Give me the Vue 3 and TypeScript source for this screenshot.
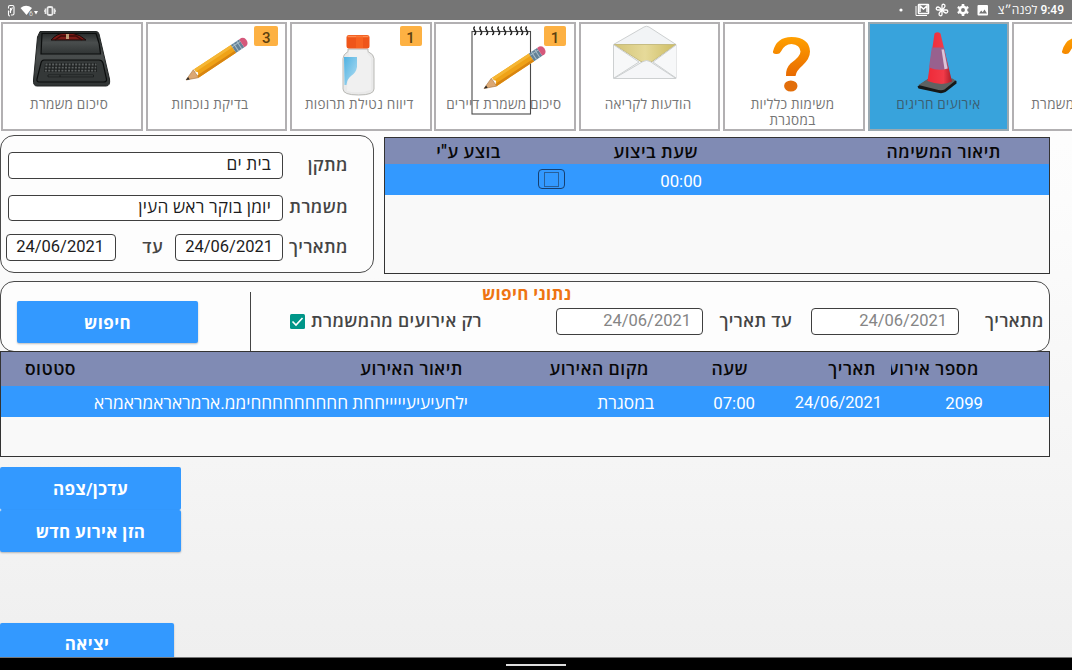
<script setup lang="ts">
type Art = 'typewriter' | 'pencil' | 'bottle' | 'notebook' | 'envelope' | 'question' | 'cone'

interface Tile {
  lines: string[]
  art: Art
  badge?: number
  active?: boolean
  shift?: string
}

const tiles: Tile[] = [
  { lines: ['סיכום משמרת'], art: 'typewriter', shift: 'shift-m' },
  { lines: ['בדיקת נוכחות'], art: 'pencil', badge: 3, shift: 'shift-l' },
  { lines: ['דיווח נטילת תרופות'], art: 'bottle', badge: 1 },
  { lines: ['סיכום משמרת דיירים'], art: 'notebook', badge: 1 },
  { lines: ['הודעות לקריאה'], art: 'envelope' },
  { lines: ['משימות כלליות', 'במסגרת'], art: 'question' },
  { lines: ['אירועים חריגים'], art: 'cone', active: true },
  { lines: ['משימות משמרת'], art: 'question', shift: 'shift-l' },
]

const eventHeaders: string[] = ['מספר אירוע', 'תאריך', 'שעה', 'מקום האירוע', 'תיאור האירוע', 'סטטוס']
const eventRow: string[] = ['2099', '24/06/2021', '07:00', 'במסגרת', 'ילחעיעיעיייייחחת חחחחחחחחחיממ.ארמראראמראמרא', '']
const spirals: number[] = [40, 46, 52, 58, 64, 70, 76, 82, 87, 92]
const keys: number[] = [0, 1, 2]
const petals: number[] = [0, 90, 180, 270]
</script>

<template>
  <div class="screen">
    <header class="status">
      <div class="status-left">
        <svg width="50" height="14" viewBox="0 0 50 14">
          <g fill="none" stroke="#fff" stroke-width="1.1">
            <path d="M1.500 4.500V3q0-1.500 1.500-1.500h2.500q1.500 0 1.500 1.500v6.500q0 1.500-1.500 1.500H4M1.500 6.500v4q0 1.500 1.500 1.500M3 8 5.500 3.500M3.500 4v5" />
          </g>
          <path d="M13.500 4Q19-.5 25 4L19.500 11Z" fill="#fff" />
          <text x="22" y="11.500" class="tiny">6</text>
          <path d="M27 7h4l-2 3.500z" fill="#fff" />
          <g fill="none" stroke="#e8e8e8">
            <rect x="40.500" y="3" width="5" height="8" rx="1.500" stroke-width="1.800" />
            <path d="M38.500 4.500v5.500M47.500 4.500v5.500M37 7h1M48 7h1" stroke-width="1.600" />
          </g>
        </svg>
      </div>
      <div class="status-right">
        <svg width="92" height="16" viewBox="0 0 92 16">
          <circle cx="5" cy="8" r="1.600" fill="#fff" />
          <g fill="none" stroke="#fff" stroke-width="1.500">
            <path d="M20 4v9.500h11" stroke-width="1" />
            <rect x="22.500" y="2.500" width="10" height="9" rx=".5" />
            <path d="M24 10V4l3.500 3L31 4v6" />
          </g>
          <g fill="none" stroke="#fff" stroke-width="1.300" transform="translate(46 8)">
            <path v-for="p in petals" :key="p" d="M0 0V-4.500Q0-5.800 1.500-5.800Q3.200-5.500 3-3.800Q2.700-2.300 0 0Z" :transform="`rotate(${p})`" />
          </g>
          <g stroke="#fff" fill="none">
            <circle cx="67" cy="8" r="3.200" stroke-width="2.500" />
            <path d="M67 2v2M67 12v2M61.800 5l1.700 1M70.500 10l1.700 1M61.800 11l1.700-1M70.500 6l1.700-1" stroke-width="2.600" />
          </g>
          <rect x="81.500" y="3" width="10.500" height="10.500" rx="1" fill="#fff" />
          <path d="M83 11.500l2.200-3 1.500 1.800L88.500 7.500l2.500 4z" fill="#757575" />
        </svg>
        <span class="clock" dir="rtl">9:49 לפנה״צ</span>
      </div>
    </header>

    <nav class="tiles">
      <div v-for="(tile, i) in tiles" :key="i" class="tile" :class="[{ active: tile.active }, tile.shift]">
        <div class="caption" dir="rtl">
          <div v-for="line in tile.lines" :key="line">{{ line }}</div>
        </div>
        <svg class="art" width="141" height="108" viewBox="0 0 141 108">
          <defs>
            <linearGradient :id="'orange' + i" x1="0" y1="0" x2="0" y2="1">
              <stop offset="0" stop-color="#ffa000" /><stop offset="1" stop-color="#e86a00" />
            </linearGradient>
            <linearGradient :id="'dark' + i" x1="0" y1="0" x2="0" y2="1">
              <stop offset="0" stop-color="#292d2d" /><stop offset=".45" stop-color="#494d4d" /><stop offset="1" stop-color="#303434" />
            </linearGradient>
            <linearGradient :id="'sand' + i" x1="0" y1="0" x2="1" y2="0">
              <stop offset="0" stop-color="#d3c478" /><stop offset=".5" stop-color="#e6da9a" /><stop offset="1" stop-color="#cdbc62" />
            </linearGradient>
            <linearGradient :id="'sky' + i" x1="0" y1="0" x2="1" y2="1">
              <stop offset="0" stop-color="#4fb2e2" /><stop offset="1" stop-color="#b4def2" />
            </linearGradient>
            <linearGradient :id="'red' + i" x1="0" y1="0" x2="1" y2="0">
              <stop offset="0" stop-color="#ee2a38" /><stop offset=".65" stop-color="#f23a48" /><stop offset="1" stop-color="#a81c28" />
            </linearGradient>
          </defs>

          <g v-if="tile.art === 'typewriter'">
            <path d="M39 9.500H95Q97.500 9.500 98 12L108.500 57Q109.500 64 105 64H36Q32 64 32.500 58L36.500 15Z" :fill="`url(#dark${i})`" stroke="#222525" />
            <path d="M41 11.500h54q4 10 4.500 20.500H40z" :fill="`url(#dark${i})`" stroke="#0c0e0e" stroke-width="1.200" />
            <path d="M50 18Q56 11.500 62 11.500h10q7 1 13 6.500z" fill="#7d1b17" stroke="#160a0a" />
            <path d="M54 18l6-4h15l6 4" fill="none" stroke="#3e0b09" stroke-width="1.500" />
            <path d="M65 12h3v5h-3z" fill="#c19a74" />
            <path d="M43 38h55q3 0 4 3l3.500 16q.5 3-3 3H38q-2.500 0-2-3L40 41q.5-3 3-3z" fill="#343838" stroke="#0b0d0d" stroke-width="1.200" />
            <path d="M44 41h52v9H43z" fill="#1f2222" />
            <path v-for="k in keys" :key="k" :d="`M${44.500 - k * .3} ${42.500 + k * 3.100}h51`" stroke="#5c6060" stroke-width="1.800" stroke-dasharray="2 1.300" />
            <path d="M47 53h45.500v1.800H47zM59 53v2" fill="#484c4c" stroke="#101212" stroke-width=".7" />
          </g>

          <g v-if="tile.art === 'notebook'">
            <rect x="38" y="9.500" width="58.500" height="82.500" fill="none" stroke="#4a4a4a" stroke-width="1.100" />
            <path v-for="s in spirals" :key="s" :d="`M${s} 12.500q2 0 1.500-2.500l-1.500-3q-.5-2 1-2`" fill="none" stroke="#222" stroke-width="1.500" />
          </g>

          <g v-if="tile.art === 'pencil' || tile.art === 'notebook'" :transform="tile.art === 'pencil' ? 'translate(40 58) rotate(-33.500) scale(.98 .9)' : 'translate(50 66.500) rotate(-33.500) scale(.98 .9)'">
            <path d="M0 0 12-5V5.500z" fill="#dca873" stroke="#a97845" stroke-width=".6" />
            <path d="M0 0 3.500-1.500V1.700z" fill="#292929" />
            <path d="M12-5Q15-4 13-1.700Q16 0 13 2.200Q15 4 12 5.500H58V-5z" fill="#efa217" />
            <path d="M13-5H58V-1.700H13z" fill="#f5b634" />
            <path d="M12 2.800H58V5.500H12z" fill="#d88510" />
            <path d="M58-5h10V5.500H58z" fill="#638197" />
            <path d="M58-2.500H68M61-5V5.500M65-5V5.500" stroke="#a8bdc8" stroke-width="1" />
            <path d="M68-5h2.500Q74-4.500 74 0T70.500 5.500H68z" fill="#d5587b" />
          </g>

          <g v-if="tile.art === 'bottle'">
            <path d="M58 27h20v2.500q6 3 6 7V67q0 6-15.500 6T53 67V36.500q0-4 5-7z" fill="#e9e9e9" stroke="#b9b9b5" />
            <path d="M59 28h18v3l4 5v32q-12 4-24 1z" fill="#f5f5f5" opacity=".55" />
            <path d="M54 35H67V45Q66 51 61 54Q57 57 56.500 63H54.500z" :fill="`url(#sky${i})`" />
            <rect x="56.500" y="13" width="23" height="13.500" rx="2.500" fill="#ef5519" />
            <path d="M57.500 14.500h21" stroke="#ff8c50" stroke-width="1.500" />
            <path d="M66 14h7v12h-7z" fill="#fb6a24" opacity=".6" />
          </g>

          <g v-if="tile.art === 'envelope'" stroke="#cdd0d1" stroke-linejoin="round">
            <path d="M34.500 22.500 65 5q2.500-1.500 5 0L97 22.500v34H34.500z" fill="#f2f4f6" />
            <path d="M35 22.500H97L73 39.500H62z" :fill="`url(#sand${i})`" stroke="#c6bc82" />
            <path d="M35 23 60 40 35 56M97 23 74 40l23 16" fill="#f7f8f9" />
            <path d="M35 56.500 64 39.500q3.500-2 7 0L97 56.500z" fill="#f5f6f8" />
          </g>

          <g v-if="tile.art === 'question'" transform="translate(.5 .5)">
            <path d="M49.500 29Q53 14.500 68 14.500Q86 15 86.500 29Q86.500 36 79 43Q72.500 48.500 72 53.500H62.500Q62 46 67 41Q77 34 77 29Q76.500 22 68 21.500Q61 21.500 57.500 29Q56 32 52.500 31.500Q49 31 49.500 29Z" :fill="`url(#orange${i})`" />
            <ellipse cx="67.300" cy="63.500" rx="6.700" ry="5.500" fill="#e26e0a" />
          </g>

          <g v-if="tile.art === 'cone'" transform="translate(.5 .5)">
            <path d="M49 64 59 57H84L88 58.500V61L77 69.500Q74 71 71 70.500L50 66z" fill="#161818" />
            <path d="M50 62.500 60 56H84L87 58 76 67Q74 68 70 67.500z" fill="#5f6262" />
            <path d="M66 11q3-2.500 6 0L83.500 59q-10 5-24.500-.5z" :fill="`url(#red${i})`" />
            <path d="M63.300 25H75.500L79.800 46Q70 49 60.500 45z" fill="#98618e" />
            <path d="M73 27h2.500L79 46l-3 .8z" fill="#dcc5d8" />
          </g>
        </svg>
        <span v-if="tile.badge" class="badge" :class="'badge-' + tile.art">{{ tile.badge }}</span>
      </div>
    </nav>

    <main class="content">
      <section class="upper">
        <div class="card shift-card" dir="rtl">
          <div class="field row-a"><label>מתקן</label><div class="box wide"><span>בית ים</span></div></div>
          <div class="field row-b"><label>משמרת</label><div class="box wide"><span>יומן בוקר ראש העין</span></div></div>
          <div class="field row-c">
            <label>מתאריך</label>
            <div class="box date date-one"><span>24/06/2021</span></div>
            <label class="until">עד</label>
            <div class="box date date-two"><span>24/06/2021</span></div>
          </div>
        </div>

        <div class="table tasks" dir="rtl">
          <div class="head">
            <span class="h-desc">תיאור המשימה</span>
            <span class="h-time">שעת ביצוע</span>
            <span class="h-by">בוצע ע"י</span>
          </div>
          <div class="line">
            <span class="task-time">00:00</span>
            <span class="check-frame"><span class="check-inner"></span></span>
          </div>
        </div>
      </section>

      <section class="card search" dir="rtl">
        <label class="s-from">מתאריך</label>
        <div class="box date s-box-from"><span>24/06/2021</span></div>
        <label class="s-to">עד תאריך</label>
        <div class="box date s-box-to"><span>24/06/2021</span></div>
        <label class="s-only">רק אירועים מהמשמרת</label>
        <svg class="checkbox" width="15" height="15" viewBox="0 0 15 15">
          <rect width="15" height="15" rx="1.500" fill="#009688" />
          <path d="M2.500 7.500 6 11l6.500-7" fill="none" stroke="#fff" stroke-width="1.600" />
        </svg>
        <div class="divider"></div>
        <button class="btn find">חיפוש</button>
        <h2 class="title">נתוני חיפוש</h2>
      </section>

      <section class="table events" dir="rtl">
        <div class="head"><span v-for="(h, i) in eventHeaders" :key="h" :class="'eh' + i">{{ h }}</span></div>
        <div class="line"><span v-for="(c, i) in eventRow" :key="i" :class="'ev' + i">{{ c }}</span></div>
      </section>

      <section class="actions">
        <button class="btn update">עדכן/צפה</button>
        <button class="btn create">הזן אירוע חדש</button>
        <button class="btn exit">יציאה</button>
      </section>
    </main>
    <footer class="navbar"><div class="handle"></div></footer>
  </div>
</template>

<style>
html, body { margin: 0; overflow: hidden; }
</style>

<style scoped>
* { box-sizing: border-box; }
.screen { width: 1072px; height: 670px; overflow: hidden; display: flex; flex-direction: column; font-family: Roboto, "Open Sans", "Noto Sans", sans-serif; background: linear-gradient(#fff 20px, #fcfcfc 200px, #f5f5f5 460px, #efefef 656px); }
.status { height: 20px; flex: none; background: #757575; display: flex; justify-content: space-between; color: #fff; }
.status-left { padding: 3px 0 0 7px; }
.status-right { display: flex; padding: 2px 8px 0 0; gap: 10px; }
.tiny { font-size: 7px; fill: #ddd; font-family: Roboto, sans-serif; }
.clock { font-size: 12px; line-height: 16px; font-weight: 500; white-space: nowrap; width: 66px; }

.tiles { height: 111px; flex: none; display: flex; gap: 2.900px; padding: 2px 0 0 1.300px; background: #fff; }
.tile { position: relative; flex: none; width: 141.500px; height: 108.500px; border: 2px solid #b2b0b2; background: #fff; padding-top: 72px; }
.tile.active { background: #38a3dc; border-color: #9aa9b1; }
.caption { color: #757575; font-size: 13.500px; letter-spacing: .3px; line-height: 16px; text-align: center; white-space: nowrap; padding-right: 3px; }
.active .caption { color: #3b5e72; padding-right: 0; }
.shift-m .caption { padding-right: 6px; }
.shift-l .caption { padding-right: 13px; }
.art { position: absolute; left: -2px; top: -2px; }
.badge { position: absolute; top: 2px; right: 7px; width: 24px; height: 20px; border-radius: 2px; background: #fdb143; color: #5c400f; font-size: 15px; font-weight: 500; line-height: 25px; text-align: center; overflow: hidden; }
.badge-bottle, .badge-notebook { right: 8px; width: 22px; }

.content { flex: none; height: 525.500px; overflow: hidden; }
.upper { display: flex; height: 149.500px; }
.card { border: 1px solid #4a4a4a; border-radius: 14px; background: #fdfdfd; }
.shift-card { width: 374px; height: 138px; margin-top: 4px; padding: 16px 25px 0 0; }
.field { display: flex; height: 27px; align-items: flex-start; }
.field label, .search label { font-weight: 600; font-size: 17.500px; letter-spacing: .4px; line-height: 27px; white-space: nowrap; color: #454545; }
.field label { width: 58px; margin-left: 7px; flex: none; }
.row-b { margin-top: 16px; }
.row-b label { line-height: 25px; }
.row-c { margin-top: 12px; }
.field .until { width: 20px; margin: 0 12px 0 27px; }
.box { height: 26.500px; border: 1px solid #3f3f3f; border-radius: 4px; background: #fff; color: #1c1c1c; font-size: 17.300px; letter-spacing: .2px; line-height: 23px; padding-right: 11px; white-space: nowrap; flex: none; }
.date { font-size: 16.500px; letter-spacing: 0; }
.row-b .box { height: 26px; line-height: 22px; }
.wide { width: 275px; }
.date-one { width: 108px; padding-right: 9px; }
.date-two { width: 110px; }

.table { border: 1px solid #333; background: #f9f9f9; }
.tasks { width: 666px; height: 137px; margin: 6px 0 0 10px; }
.head { display: flex; background: #808bb4; color: #080808; font-weight: 600; font-size: 17.500px; letter-spacing: .5px; white-space: nowrap; }
.line { display: flex; height: 31px; background: #3399ff; color: #fff; font-size: 16.800px; white-space: nowrap; }
.head > span, .line > span { flex: none; }
.tasks .head { height: 26px; line-height: 28px; padding-right: 48px; }
.h-desc { width: 303px; }
.h-time { width: 197px; }
.tasks .line { padding-right: 347px; line-height: 35px; }
.task-time { width: 137px; }
.check-frame { width: 27px; height: 20px; margin-top: 5px; border: 1px solid #163f70; border-radius: 4px; display: flex; justify-content: center; align-items: center; }
.check-inner { width: 15px; height: 15px; border: 1.500px solid #285f99; }

.search { position: relative; width: 1050px; height: 71.500px; display: flex; align-items: flex-start; padding-right: 5px; }
.search label { margin-top: 26px; flex: none; }
.search .box { margin-top: 26.500px; color: #858585; }
.s-from { width: 61px; }
.s-box-from { width: 148px; margin-right: 24px; }
.s-to { width: 72px; margin-right: 19px; }
.s-box-to { width: 147px; margin-right: 17px; }
.s-only { width: 172px; margin-right: 74px; }
.checkbox { margin: 32.500px 5px 0 0; flex: none; }
.divider { width: 1px; height: 60px; background: #444; margin: 10px 39px 0 0; flex: none; }
.title { position: absolute; left: 481px; top: 1px; margin: 0; color: #ee7412; font-size: 17px; letter-spacing: .3px; line-height: 23px; font-weight: 700; white-space: nowrap; }
.btn { border: 0; padding: 0; background: #3399ff; color: #fff; font: 700 17px Roboto, "Open Sans", sans-serif; letter-spacing: .35px; border-radius: 2px; box-shadow: 0 1px 2px rgba(0, 0, 0, .25); display: block; }
.find { width: 181px; height: 42px; margin: 19.500px 52px 0 0; flex: none; }

.events { position: relative; width: 1050px; height: 106px; margin-top: -1px; }
.events .head { height: 34px; line-height: 35px; padding-right: 70px; }
.events .line { height: 30.500px; line-height: 34px; padding-right: 66px; }
.eh0 { width: 88px; margin-left: 15px; overflow: hidden; }
.eh1 { width: 128px; }
.eh2 { width: 99px; }
.eh3 { width: 186px; }
.eh4 { width: 387px; }
.ev0 { width: 101px; }
.ev1 { width: 127px; font-size: 16.400px; }
.ev2 { width: 101px; }
.ev3 { width: 186px; font-size: 17.300px; }
.ev4 { width: 380px; font-size: 17.300px; }

.actions { padding-top: 10px; }
.update { width: 181px; height: 43px; box-shadow: none; }
.create { width: 181px; height: 42px; }
.exit { width: 174px; height: 40px; margin-top: 71px; }
.navbar { flex: 1; background: #000; border-top: 1px solid #777; display: flex; justify-content: center; }
.handle { width: 60px; height: 2px; background: #ddd; margin-top: 6px; }
</style>
